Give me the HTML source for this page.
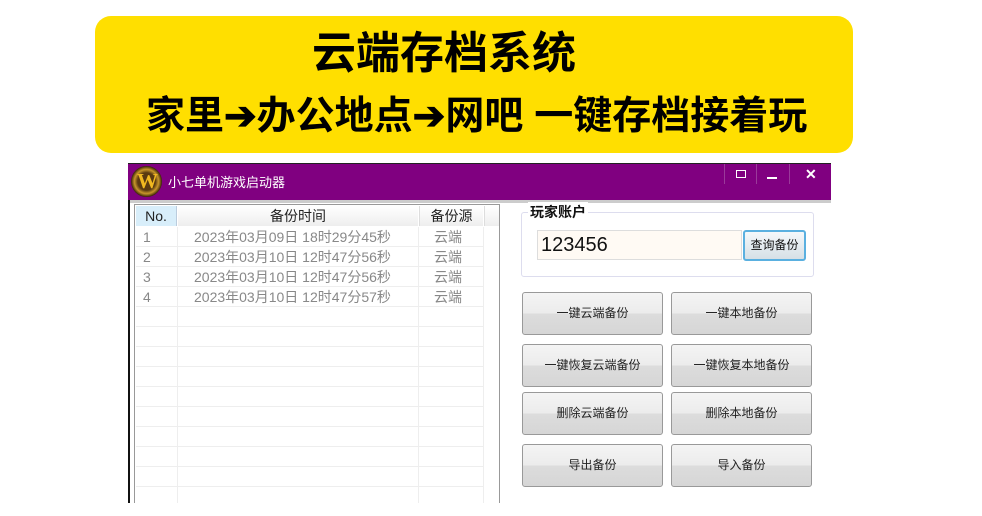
<!DOCTYPE html>
<html><head><meta charset="utf-8"><style>
*{margin:0;padding:0;box-sizing:border-box}
body{width:982px;height:516px;background:#fff;position:relative;overflow:hidden;font-family:"Liberation Sans","Noto Sans CJK SC",sans-serif}
.ab{position:absolute}
.banner{left:95px;top:16px;width:758px;height:137px;background:#FFDF00;border-radius:16px}
.t1{left:0;width:888px;top:28px;text-align:center;font-size:44px;font-weight:bold;color:#000;line-height:52px}
.t2{left:146px;top:92px;font-size:39px;font-weight:bold;color:#000;line-height:50px;white-space:nowrap}
.win{left:128px;top:163px;width:703px;height:340px;background:#fff;border-left:2px solid #111}
.title{left:128px;top:163px;width:703px;height:37px;background:#800080;border-top:1px solid #222}
.tline{left:130px;top:200px;width:701px;height:3px;background:#ccc}
.tt{left:168px;top:172px;color:#fff;font-size:13px}
.logo{left:131px;top:166px;width:31px;height:31px;border-radius:50%;background:radial-gradient(circle,#5a3a10 40%,#c8962a 55%,#3b2508 70%);}
.logo span{position:absolute;left:6px;top:3px;font-size:21px;font-weight:bold;color:#f0b820;font-family:"Liberation Serif",serif}
.ctl{color:#fff;font-size:14px;top:166px}
.tbl{left:134px;top:204px;width:366px;height:299px;border:1px solid #999;border-bottom:none;background:#fff;overflow:hidden}
.hdr{position:absolute;top:1px;height:20px;font-size:14px;line-height:20px;text-align:center;color:#222;background:linear-gradient(#fff,#eee)}
.row{position:absolute;left:1px;width:347px;height:20px;border-bottom:1px solid #eee;font-size:14px;line-height:20px;color:#888;white-space:nowrap}
.vl{position:absolute;top:22px;bottom:0;width:1px;background:#eee}
.grp{left:521px;top:212px;width:293px;height:65px;border:1px solid #dde;border-radius:3px}
.gl{left:528px;top:202px;font-size:14px;font-weight:bold;background:#fff;padding:0 2px;color:#111}
.inp{left:537px;top:230px;width:205px;height:30px;background:#fffaf4;border:1px solid #ddd;font-size:20px;line-height:28px;padding-left:3px;color:#111}
.q{left:743px;top:230px;width:63px;height:31px;border:2px solid #5ab0e0;border-radius:3px;background:linear-gradient(#f4f8fb,#d6e0e6);font-size:12px;line-height:27px;text-align:center;color:#111}
.b{position:absolute;width:141px;height:43px;border:1px solid #999;border-radius:3px;background:linear-gradient(#f4f4f4 0%,#ececec 48%,#dcdcdc 52%,#d6d6d6 100%);font-size:12px;line-height:41px;text-align:center;color:#222}
</style></head><body>
<div class="ab banner"></div>
<div class="ab t1">云端存档系统</div>
<div class="ab t2">家里➔办公地点➔网吧 一键存档接着玩</div>
<div class="ab win"></div>
<div class="ab title"></div>
<div class="ab tline"></div>
<div class="ab logo"><span>W</span></div>
<div class="ab tt">小七单机游戏启动器</div>
<div class="ab" style="left:724px;top:164px;width:1px;height:20px;background:#9a3a9a"></div>
<div class="ab" style="left:756px;top:164px;width:1px;height:20px;background:#9a3a9a"></div>
<div class="ab" style="left:789px;top:164px;width:1px;height:20px;background:#9a3a9a"></div>
<div class="ab" style="left:736px;top:170px;width:10px;height:8px;border:1px solid #fff"></div>
<div class="ab" style="left:767px;top:177px;width:10px;height:2px;background:#fff"></div>
<div class="ab ctl" style="left:805px;font-weight:bold">✕</div>
<div class="ab tbl">
<div class="hdr" style="left:1px;width:41px;background:#d8eefa;border-right:1px solid #bcd">No.</div>
<div class="hdr" style="left:43px;width:240px">备份时间</div>
<div class="hdr" style="left:284px;width:64px;border-left:1px solid #ddd">备份源</div>
<div class="hdr" style="left:349px;width:15px;border-left:1px solid #ddd"></div>
<div class="vl" style="left:42px"></div><div class="vl" style="left:283px"></div><div class="vl" style="left:348px"></div>
<div class="row" style="top:22px"><span class="ab" style="left:7px">1</span><span class="ab" style="left:58px">2023年03月09日 18时29分45秒</span><span class="ab" style="left:298px">云端</span></div>
<div class="row" style="top:42px"><span class="ab" style="left:7px">2</span><span class="ab" style="left:58px">2023年03月10日 12时47分56秒</span><span class="ab" style="left:298px">云端</span></div>
<div class="row" style="top:62px"><span class="ab" style="left:7px">3</span><span class="ab" style="left:58px">2023年03月10日 12时47分56秒</span><span class="ab" style="left:298px">云端</span></div>
<div class="row" style="top:82px"><span class="ab" style="left:7px">4</span><span class="ab" style="left:58px">2023年03月10日 12时47分57秒</span><span class="ab" style="left:298px">云端</span></div>
<div class="row" style="top:102px"></div><div class="row" style="top:122px"></div><div class="row" style="top:142px"></div><div class="row" style="top:162px"></div><div class="row" style="top:182px"></div><div class="row" style="top:202px"></div><div class="row" style="top:222px"></div><div class="row" style="top:242px"></div><div class="row" style="top:262px"></div><div class="row" style="top:282px"></div>
</div>
<div class="b" style="left:522px;top:292px">一键云端备份</div>
<div class="b" style="left:671px;top:292px">一键本地备份</div>
<div class="b" style="left:522px;top:344px">一键恢复云端备份</div>
<div class="b" style="left:671px;top:344px">一键恢复本地备份</div>
<div class="b" style="left:522px;top:392px">删除云端备份</div>
<div class="b" style="left:671px;top:392px">删除本地备份</div>
<div class="b" style="left:522px;top:444px">导出备份</div>
<div class="b" style="left:671px;top:444px">导入备份</div>
<div class="ab grp"></div>
<div class="ab gl">玩家账户</div>
<div class="ab inp">123456</div>
<div class="ab q">查询备份</div>
</body></html>
